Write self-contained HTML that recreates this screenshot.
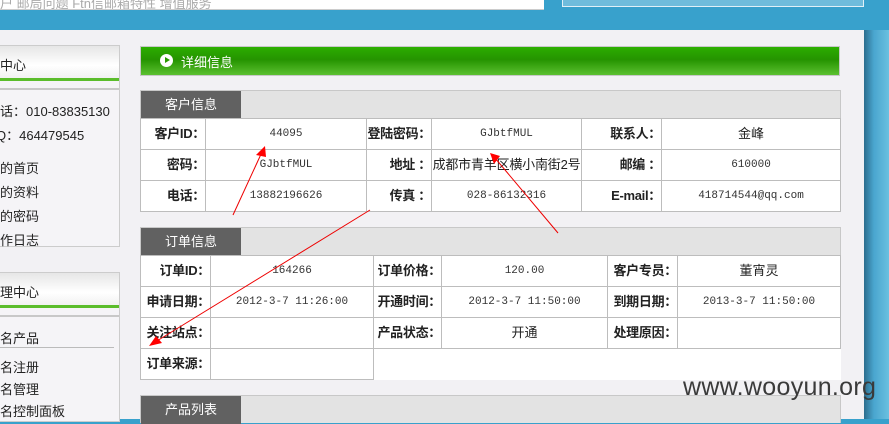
<!DOCTYPE html>
<html><head><meta charset="utf-8"><style>
*{margin:0;padding:0;box-sizing:border-box}
body{width:889px;height:419px;overflow:hidden;position:relative;background:#38a1cc;font-family:"Liberation Sans","Noto Sans CJK SC",sans-serif;font-size:13px;color:#222}
.a{position:absolute;white-space:nowrap}
.mono{font-family:"Liberation Mono","Noto Sans CJK SC",monospace;font-size:11px;color:#333}
table{position:absolute;border-collapse:collapse;background:#fff;table-layout:fixed}
td{border:1px solid #bdbdbd;height:31px;max-height:31px;padding:0;text-align:center;vertical-align:middle;white-space:nowrap;overflow:hidden;line-height:14px}
td.l{text-align:right;font-weight:bold;padding-right:0;font-size:13px;letter-spacing:-0.3px}
.hd{position:absolute;height:28px;background:#e3e3e3;border:1px solid #c8c8c8;border-bottom:none}
.hd span{display:block;width:100px;height:28px;background:#616161;color:#fff;line-height:28px;text-align:center;font-size:13px}
</style></head><body>
<div class="a" style="left:0;top:0;width:544px;height:10px;background:#fff;border-bottom:1px solid #ccc;overflow:hidden"><div style="position:relative;top:-7px;color:#aaa;font-size:13px;white-space:nowrap">户 邮局问题 Ftn信邮箱特性 增值服务</div></div>
<div class="a" style="left:562px;top:0;width:302px;height:7px;background:#6fbcdc;border:1px solid #e0f0f8;border-top:none"></div>
<div class="a" style="left:0;top:30px;width:864px;height:389px;background:#f2f1f4"></div>
<div class="a" style="left:864px;top:30px;width:25px;height:389px;background:linear-gradient(90deg,#2c6e8e,#4aa6cf 40%,#6ac0e0)"></div>

<div class="a" style="left:0;top:45px;width:120px;height:202px;background:#f5f4f7;border:1px solid #ccc;border-left:none"></div>
<div class="a" style="left:0;top:46px;width:119px;height:35px;background:linear-gradient(#e6e6e6,#fff 60%,#f2f2f2);border-bottom:3px solid #5bbd2b"></div>
<div class="a" style="left:0;top:88px;width:119px;height:2px;background:#c8c8c8"></div>
<div class="a" style="left:-13px;top:55px">管中心</div>
<div class="a" style="left:-13px;top:101px">电话：010-83835130</div>
<div class="a" style="left:-4px;top:125px">Q：464479545</div>
<div class="a" style="left:-13px;top:158px">我的首页</div>
<div class="a" style="left:-13px;top:182px">我的资料</div>
<div class="a" style="left:-13px;top:206px">我的密码</div>
<div class="a" style="left:-13px;top:230px">操作日志</div>

<div class="a" style="left:0;top:272px;width:120px;height:150px;background:#f5f4f7;border:1px solid #ccc;border-left:none"></div>
<div class="a" style="left:0;top:273px;width:119px;height:35px;background:linear-gradient(#e6e6e6,#fff 60%,#f2f2f2);border-bottom:3px solid #5bbd2b"></div>
<div class="a" style="left:0;top:315px;width:119px;height:2px;background:#c8c8c8"></div>
<div class="a" style="left:-13px;top:282px">管理中心</div>
<div class="a" style="left:-13px;top:328px">域名产品</div>
<div class="a" style="left:0;top:347px;width:114px;height:1px;background:#bbb"></div>
<div class="a" style="left:-13px;top:357px">域名注册</div>
<div class="a" style="left:-13px;top:379px">域名管理</div>
<div class="a" style="left:-13px;top:401px">域名控制面板</div>

<div class="a" style="left:140px;top:46px;width:700px;height:30px;border:1px solid #c8c8c8;background:linear-gradient(#2db000 0,#2aa600 12%,#259400 45%,#5cc030 100%)"></div>
<div class="a" style="left:160px;top:54px;width:13px;height:13px;border-radius:50%;background:#fff"></div>
<div class="a" style="left:165px;top:57px;width:0;height:0;border-left:5px solid #2a9a00;border-top:3.5px solid transparent;border-bottom:3.5px solid transparent"></div>
<div class="a" style="left:181px;top:52px;color:#fff">详细信息</div>

<div class="hd" style="left:140px;top:90px;width:701px"><span>客户信息</span></div>
<table style="left:140px;top:118px;width:701px">
<colgroup><col style="width:65px"><col style="width:161px"><col style="width:65px"><col style="width:150px"><col style="width:80px"><col></colgroup>
<tr><td class="l">客户ID：</td><td class="mono">44095</td><td class="l">登陆密码：</td><td class="mono">GJbtfMUL</td><td class="l">联系人：</td><td>金峰</td></tr>
<tr><td class="l">密码：</td><td class="mono">GJbtfMUL</td><td class="l">地址 ：</td><td style="font-size:13px;letter-spacing:-0.2px">成都市青羊区横小南街2号</td><td class="l">邮编 ：</td><td class="mono">610000</td></tr>
<tr><td class="l">电话：</td><td class="mono">13882196626</td><td class="l">传真 ：</td><td class="mono">028-86132316</td><td class="l">E-mail：</td><td class="mono">418714544@qq.com</td></tr>
</table>

<div class="hd" style="left:140px;top:227px;width:701px"><span>订单信息</span></div>
<div class="a" style="left:140px;top:255px;width:701px;height:125px;background:#fff"></div>
<table style="left:140px;top:255px;width:701px">
<colgroup><col style="width:70px"><col style="width:163px"><col style="width:68px"><col style="width:166px"><col style="width:70px"><col></colgroup>
<tr><td class="l">订单ID：</td><td class="mono">164266</td><td class="l">订单价格：</td><td class="mono">120.00</td><td class="l">客户专员：</td><td>董宵灵</td></tr>
<tr><td class="l">申请日期：</td><td class="mono">2012-3-7 11:26:00</td><td class="l">开通时间：</td><td class="mono">2012-3-7 11:50:00</td><td class="l">到期日期：</td><td class="mono">2013-3-7 11:50:00</td></tr>
<tr><td class="l">关注站点：</td><td></td><td class="l">产品状态：</td><td>开通</td><td class="l">处理原因：</td><td></td></tr>
<tr><td class="l">订单来源：</td><td></td><td style="border:none;border-left:1px solid #bdbdbd"></td><td style="border:none"></td><td style="border:none"></td><td style="border:none"></td></tr>
</table>

<div class="hd" style="left:140px;top:395px;width:701px"><span>产品列表</span></div>

<div class="a" style="left:683px;top:373px;font-size:25px;color:#3a3a3a;letter-spacing:0.3px">www.wooyun.org</div>

<svg class="a" style="left:0;top:0" width="889" height="419">
<g stroke="#e00" stroke-width="1" fill="none">
<line x1="233" y1="215" x2="262" y2="152"/>
<line x1="370" y1="210" x2="152" y2="344"/>
<line x1="558" y1="233" x2="495" y2="158"/>
</g>
<g fill="#f00">
<polygon points="265,146 256,155 266,157"/>
<polygon points="149,346 156,336 162,343"/>
<polygon points="490,153 500,156 494,164"/>
</g>
</svg>
</body></html>
